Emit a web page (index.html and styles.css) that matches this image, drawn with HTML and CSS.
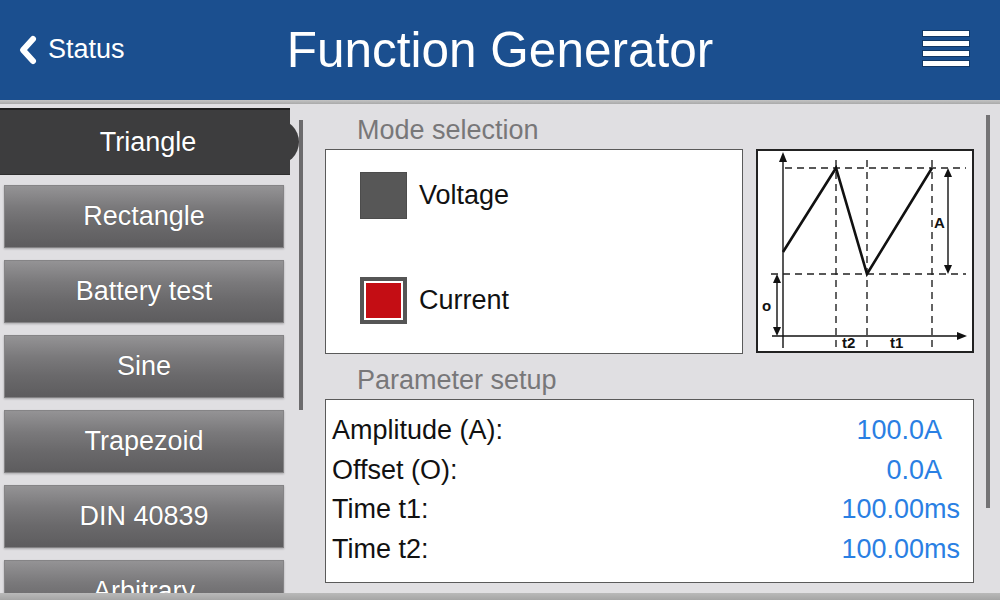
FILE: index.html
```html
<!DOCTYPE html>
<html lang="en">
<head>
<meta charset="utf-8">
<title>Function Generator</title>
<link rel="stylesheet" href="styles.css">
</head>
<body>
<div class="screen">
  <header class="topbar">
    <div class="back">
      <svg class="chev" width="22" height="32" viewBox="0 0 22 32"><polyline points="15,5 5,16 15,27" fill="none" stroke="#fff" stroke-width="6" stroke-linecap="round" stroke-linejoin="round"/></svg>
      <span>Status</span>
    </div>
    <h1 class="title">Function Generator</h1>
    <div class="menu">
      <span class="bar"></span><span class="bar"></span><span class="bar"></span><span class="bar"></span>
    </div>
  </header>
  <div class="rule"></div>
  <main class="main">
    <aside class="sidebar">
      <div class="modes">
        <div class="mode active">Triangle</div>
        <div class="mode">Rectangle</div>
        <div class="mode">Battery test</div>
        <div class="mode">Sine</div>
        <div class="mode">Trapezoid</div>
        <div class="mode">DIN 40839</div>
        <div class="mode">Arbitrary</div>
      </div>
      <div class="side-scroll"></div>
    </aside>
    <section class="content">
      <div class="section-label">Mode selection</div>
      <div class="mode-row">
        <div class="mode-box">
          <div class="choice"><span class="check"></span><span>Voltage</span></div>
          <div class="choice"><span class="check on"></span><span>Current</span></div>
        </div>
        <div class="diagram">
          <svg width="214" height="200" viewBox="758 151 214 200">
            <g stroke="#111" stroke-width="1.4" fill="none">
              <line x1="783" y1="348" x2="783" y2="160"/>
              <line x1="772" y1="336" x2="958" y2="336"/>
            </g>
            <g stroke="#222" stroke-width="1.4" stroke-dasharray="7 5" fill="none">
              <line x1="785" y1="168" x2="966" y2="168"/>
              <line x1="771" y1="274" x2="966" y2="274"/>
              <line x1="836" y1="160" x2="836" y2="348"/>
              <line x1="867" y1="160" x2="867" y2="348"/>
              <line x1="932" y1="160" x2="932" y2="348"/>
            </g>
            <polyline points="783,252 836,168 867,274 932,168" fill="none" stroke="#111" stroke-width="2.6" stroke-linejoin="miter"/>
            <g stroke="#111" stroke-width="1.4">
              <line x1="948" y1="174" x2="948" y2="268"/>
              <line x1="777" y1="280" x2="777" y2="330"/>
            </g>
            <g fill="#111">
              <polygon points="783,152 779,162 787,162"/>
              <polygon points="967,336 957,332 957,340"/>
              <polygon points="948,168 944,177 952,177"/>
              <polygon points="948,274 944,265 952,265"/>
              <polygon points="777,274 773,283 781,283"/>
              <polygon points="777,336 773,327 781,327"/>
            </g>
            <g class="dlabel">
              <text x="934" y="228">A</text>
              <text x="762" y="311">o</text>
              <text x="842" y="348">t2</text>
              <text x="890" y="348">t1</text>
            </g>
          </svg>
        </div>
      </div>
      <div class="section-label second">Parameter setup</div>
      <div class="param-box">
        <div class="param"><span>Amplitude (A):</span><span class="val wide">100.0A</span></div>
        <div class="param"><span>Offset (O):</span><span class="val wide">0.0A</span></div>
        <div class="param"><span>Time t1:</span><span class="val">100.00ms</span></div>
        <div class="param"><span>Time t2:</span><span class="val">100.00ms</span></div>
      </div>
    </section>
    <div class="main-scroll"></div>
  </main>
  <div class="footer-rule"></div>
</div>
</body>
</html>
```
FILE: styles.css
```css
* { box-sizing: border-box; }
html, body { margin: 0; padding: 0; }
body {
  width: 1000px;
  height: 600px;
  overflow: hidden;
  background: #e0dfe2;
  font-family: "Liberation Sans", Arial, sans-serif;
}
.screen {
  width: 1000px;
  height: 600px;
  display: flex;
  flex-direction: column;
}
.topbar {
  height: 100px;
  background: #1b4f8f;
  display: grid;
  grid-template-columns: 1fr auto 1fr;
  align-items: center;
  color: #fff;
}
.back {
  display: flex;
  align-items: center;
  padding-left: 18px;
  font-size: 27px;
  gap: 8px;
  margin-top: -1px;
}
.chev { display: block; }
.title {
  margin: 0;
  font-weight: normal;
  font-size: 49.5px;
  line-height: 1;
  margin-top: -1px;
}
.menu {
  justify-self: end;
  margin-right: 31px;
  display: flex;
  flex-direction: column;
  gap: 5px;
  margin-top: -3px;
}
.bar {
  display: block;
  width: 46px;
  height: 5px;
  background: #fff;
  box-shadow: 0 0 0 1px #123865;
}
.rule {
  height: 4px;
  background: linear-gradient(#c4c4c4, #a9a9a9);
}
.main {
  height: 489px;
  display: flex;
  overflow: hidden;
}
.sidebar {
  display: flex;
  width: 303px;
  flex: none;
}
.modes {
  width: 298px;
  padding-top: 4px;
}
.mode {
  width: 280px;
  height: 63px;
  margin-left: 4px;
  margin-bottom: 12px;
  display: flex;
  align-items: center;
  justify-content: center;
  color: #fff;
  font-size: 27px;
  background: linear-gradient(#949395 0%, #7a797b 35%, #6a696b 65%, #5d5c5e 100%);
  border: 1px solid #858486;
  box-shadow: 0 1px 2px rgba(0,0,0,0.25);
  text-shadow: 0 0 1px rgba(0,0,0,0.3);
}
.mode.active {
  position: relative;
  width: 290px;
  height: 67px;
  margin-left: 0;
  margin-bottom: 10px;
  background: #3d3d3e;
  border: none;
  border-top: 2px solid #1f1f1f;
  border-bottom: 1px solid #2e2e2e;
  padding-left: 6px;
  box-shadow: none;
}
.mode.active::after {
  content: "";
  position: absolute;
  right: -9px;
  top: 9px;
  width: 46px;
  height: 46px;
  border-radius: 50%;
  background: #3d3d3e;
  z-index: -1;
}
.side-scroll {
  width: 4px;
  height: 290px;
  margin-top: 16px;
  margin-left: 1px;
  background: #6c6b6d;
}
.content {
  width: 649px;
  margin-left: 22px;
  flex: none;
  display: flex;
  flex-direction: column;
}
.section-label {
  height: 30px;
  line-height: 30px;
  margin-top: 11px;
  padding-left: 32px;
  font-size: 27px;
  color: #787779;
}
.section-label.second {
  margin-top: 11px;
  height: 34px;
}
.mode-row {
  display: flex;
  margin-top: 4px;
}
.mode-box {
  width: 418px;
  height: 205px;
  background: #fff;
  border: 1px solid #5a5a5a;
  padding: 22px 0 0 34px;
  display: flex;
  flex-direction: column;
  gap: 58px;
}
.choice {
  display: flex;
  align-items: center;
  gap: 12px;
  font-size: 27px;
  color: #111;
}
.check {
  width: 47px;
  height: 47px;
  background: #575757;
  border: 1px solid #4c4c4c;
}
.check.on {
  border: 4px solid #555;
  background: #c40d14;
  box-shadow: inset 0 0 0 2px #fff;
}
.diagram {
  width: 218px;
  height: 204px;
  margin-left: 13px;
  background: #fff;
  border: 2px solid #222;
}
.diagram svg { display: block; overflow: visible; }
.dlabel text {
  font-family: "Liberation Sans", Arial, sans-serif;
  font-weight: bold;
  font-size: 15px;
  fill: #111;
}
.param-box {
  width: 649px;
  height: 184px;
  background: #fff;
  border: 1px solid #5a5a5a;
  padding: 11px 0 0 6px;
}
.param {
  height: 39.5px;
  display: flex;
  align-items: center;
  justify-content: space-between;
  font-size: 27px;
  color: #111;
}
.val {
  color: #2a7fe3;
  padding-right: 13px;
}
.val.wide { padding-right: 31px; }
.main-scroll {
  width: 4px;
  height: 393px;
  margin-top: 11px;
  margin-left: 12px;
  background: #747375;
}
.footer-rule {
  height: 7px;
  background: linear-gradient(#b9b9b9, #a5a5a5);
}
```
